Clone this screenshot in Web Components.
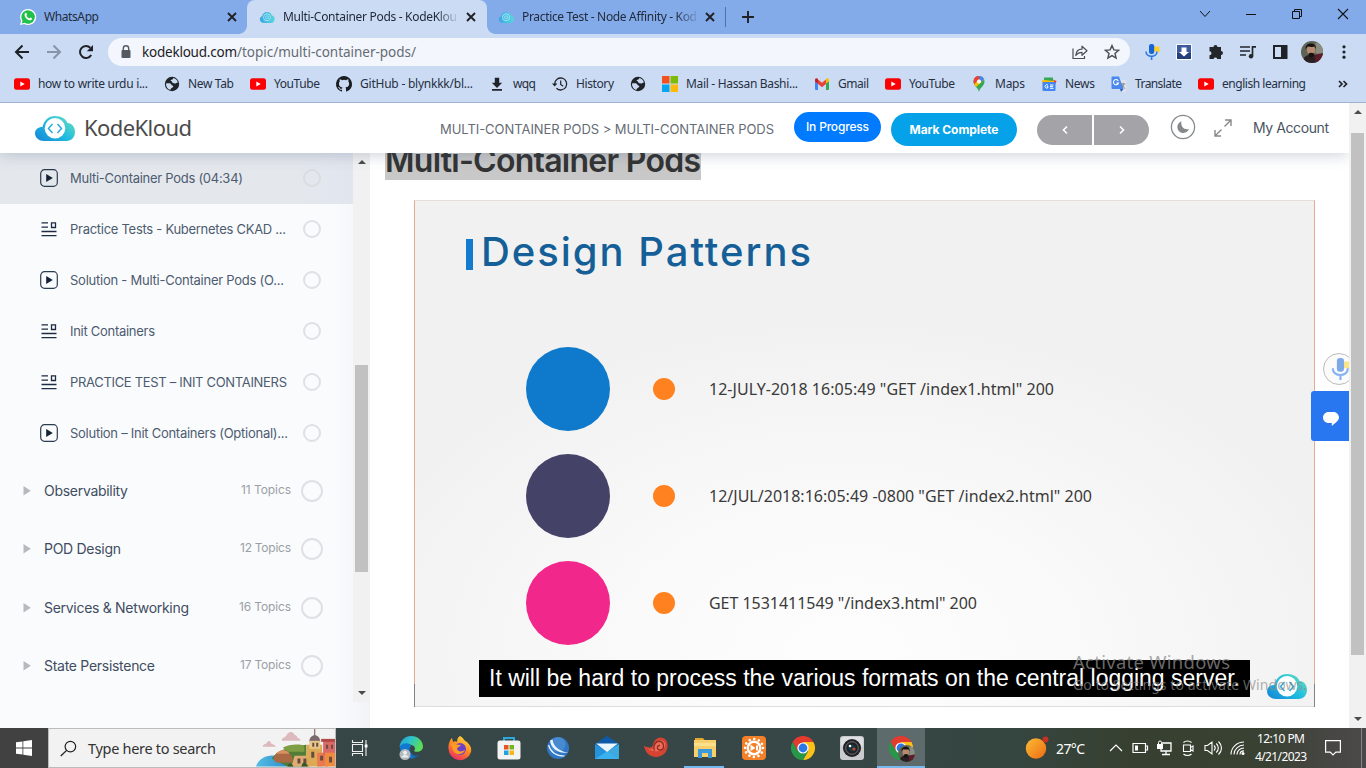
<!DOCTYPE html>
<html lang="en">
<head>
<meta charset="utf-8">
<title>Multi-Container Pods - KodeKloud</title>
<style>
html,body{margin:0;height:100%;overflow:hidden;background:#fff}
body{font-family:"Noto Sans","Open Sans",sans-serif;font-size:12px;color:#202124}
</style>
</head>
<body>
<desktop-screen></desktop-screen>
<script>
const cloud = `<defs><linearGradient id="c" x1="0" y1="1" x2="1" y2=".2"><stop offset="0" stop-color="#1584d8"/><stop offset=".55" stop-color="#1fbcdf"/><stop offset="1" stop-color="#62dcc0"/></linearGradient></defs>
<path fill="url(#c)" d="M9 25C4 25 0 21.500 0 17.500S3 11 7.500 11C9 4.500 13.500 0 20 0s11 3 12.500 7C37 7 40 11 40 16s-3.500 9-8.500 9z"/><circle cx="20" cy="12.300" r="10.300" fill="#fff"/>
<path d="M17.500 8 13.500 12.500 17.500 17M22.500 8l4 4.500-4 4.500" fill="none" stroke="#2ba9d8" stroke-width="1.500"/>`;
const chrome = `<path fill="#e33b2e" d="M12 12 2 6a12 12 0 0 1 20.400 0z"/><path fill="#e33b2e" d="M1.600 6A12 12 0 0 1 22.400 6H12l-5.200 9z"/><path fill="#fbc116" d="M22.400 6A12 12 0 0 1 12 24l5.200-9L12 6z"/><path fill="#279847" d="M12 24A12 12 0 0 1 1.600 6l5.200 9 5.200 3 5.200-3z"/><circle cx="12" cy="12" r="5.600" fill="#fff"/><circle cx="12" cy="12" r="4.400" fill="#2d78e8"/>`;
const avatar = `<defs><clipPath id="k"><circle cx="12" cy="12" r="12"/></clipPath></defs><g clip-path="url(#k)"><path fill="#5d6456" d="M0 0h24v24H0z"/><path fill="#8a8d7f" d="M16 2h8v12h-8z"/><path fill="#2a2022" d="M2 24c0-7 4-9 9-9 6 0 11 1 13 9z"/><path fill="#5c1f29" d="m15 15 9-2v11h-8z"/><ellipse cx="11" cy="10" rx="4.500" ry="6" fill="#b98a72"/><path fill="#17140f" d="M5 9C4 1 17 0 16.500 9l-1.500-3c-3 1-6 0-8 0zM8 14c2-1.500 4.500-1.500 6.500 0l-1 3-3 1.500-2-2z"/></g>`;
/* name: [viewBox, markup] */
const ICONS = {
 whatsapp:['0 0 16 16',`<path fill="#fff" d="M8 0a8 8 0 1 1-3.700 15L0 16l1.200-4A8 8 0 0 1 8 0z"/><path fill="#21c04b" d="M8 1.200a6.800 6.800 0 1 1-3.500 12.600L1.700 14.400l.8-2.700A6.800 6.800 0 0 1 8 1.200z"/><path fill="#fff" d="M5.400 4c.5-.3.900-.1 1.100.4l.5 1.200c.1.300-.5.800-.5 1.100.6 1.300 1.500 2.100 2.800 2.700.4 0 .8-.8 1.100-.9l1.500.8c.3.400-.1 1.600-1 1.900-2.400.7-6-2.400-6.300-5C4.500 5.200 4.900 4.400 5.400 4z"/>`],
 cloud:['0 0 40 25',cloud],
 minicloud:['0 0 16 11','<defs><linearGradient id="q" x2="1"><stop stop-color="#3aa5e4"/><stop offset="1" stop-color="#55d8dc"/></linearGradient></defs><path fill="url(#q)" d="M4 11a4 3.700 0 0 1-.8-7A5 5 0 0 1 12.800 3.200 4 4 0 0 1 12 11z"/><circle cx="8" cy="5.300" r="3.500" fill="none" stroke="#a5e2f2" stroke-width="1"/><circle cx="8" cy="5.300" r="1.500" fill="none" stroke="#a5e2f2" stroke-width=".9"/>'],
 x:['0 0 16 16','<path d="M4 4l8 8M12 4l-8 8" stroke="currentColor" stroke-width="1.900"/>'],
 plus:['0 0 16 16','<path d="M8 2v12M2 8h12" stroke="currentColor" stroke-width="1.900"/>'],
 chevdown:['0 0 16 16','<path d="M3 5l5 5.500L13 5" fill="none" stroke="#111" stroke-width="1"/>'],
 min:['0 0 16 16','<path d="M3 8.500h10" stroke="#111"/>'],
 restore:['0 0 16 16','<path d="M3.500 5.500h7v7h-7zM5.500 5.500v-2h7v7h-2" fill="none" stroke="#111"/>'],
 close:['0 0 16 16','<path d="M3 3l10 10M13 3L3 13" stroke="#111" stroke-width="1.100"/>'],
 back:['0 0 16 16','<path d="M15 8H2.500M8.500 1.500 2 8l6.500 6.500" fill="none" stroke="currentColor" stroke-width="2"/>'],
 fwd:['0 0 16 16','<path d="M1 8h12.500M7.500 1.500 14 8l-6.500 6.500" fill="none" stroke="currentColor" stroke-width="2"/>'],
 reload:['0 0 16 16','<path d="M13.200 11A6 6 0 1 1 12.300 3.800" fill="none" stroke="currentColor" stroke-width="2"/><path d="M15 1v6.200H8.800z" fill="currentColor"/>'],
 lock:['0 0 16 16','<rect x="3.500" y="6" width="9" height="8" rx="1" fill="#555a60"/><path d="M5.300 7V4.500a2.700 2.700 0 0 1 5.400 0V7" fill="none" stroke="#555a60" stroke-width="1.400"/>'],
 share:['0 0 16 16','<path d="M1 4.500v10h11.500V12" fill="none" stroke="#4a4e55" stroke-width="1.200"/><path d="M3.800 11.500C4 7.500 6.500 5.200 10 5.200V2.200l5 4.600-5 4.500V8.300c-2.700 0-4.700 1-6.200 3.200z" fill="none" stroke="#4a4e55" stroke-width="1.200" stroke-linejoin="round"/>'],
 star:['0 0 16 16','<path d="m8 1.600 1.900 4.300 4.700.4-3.600 3.100 1.100 4.600L8 11.600 3.900 14 5 9.400 1.400 6.300l4.700-.4z" fill="none" stroke="#4a4e55" stroke-width="1.400"/>'],
 mic:['0 0 16 16','<path fill="#fcd12a" d="M9 2.500h6.500v6.500L13.500 7.500H9z"/><rect x="5" y="0" width="5.200" height="10" rx="2.200" fill="#1565d8"/><path d="M2 7.500c0 6.500 11 6.500 11 0M7.600 12.500V16" fill="none" stroke="#2a7be8" stroke-width="1.600"/>'],
 dlbox:['0 0 16 16','<path fill="#fff" d="M0 0h16v16H0z"/><path fill="#3d5aa0" d="M1 1h14v14H1z"/><path fill="#263f7c" d="M1 9h14v6H1z"/><path fill="#fff" d="M5.500 3.500h5V8h2.500l-5 4.500L3 8h2.500z"/>'],
 puzzle:['0 0 16 16','<path fill="#23262b" d="M5.500 3a2 2 0 0 1 4 0H13v4a2 2 0 0 1 0 4v4H9.300a1.900 1.900 0 0 0-3.700 0H1.500v-3.700a2 2 0 0 0 0-4V3z"/>'],
 list:['0 0 16 16','<path d="M0 3h10M0 7h10M0 11h6M12.500 12V2.800H16" fill="none" stroke="#23262b" stroke-width="1.700"/><circle cx="11" cy="12.300" r="2.200" fill="#23262b"/>'],
 panel:['0 0 16 16','<path d="M2 2h12.500v12H2z" fill="none" stroke="#1f2226" stroke-width="2"/><path fill="#1f2226" d="M9 2h5v12H9z"/>'],
 avatar:['0 0 24 24',avatar],
 dots:['0 0 16 16','<g fill="#1f2226"><circle cx="8" cy="2.800" r="1.600"/><circle cx="8" cy="8" r="1.600"/><circle cx="8" cy="13.200" r="1.600"/></g>'],
 yt:['0 0 16 16','<rect y="2.300" width="16" height="11.400" rx="2.500" fill="#fb0204"/><path fill="#fff" d="m6.300 5.600 4.400 2.400-4.400 2.400z"/>'],
 globe:['0 0 16 16','<circle cx="8" cy="8" r="7.200" fill="#202327"/><path fill="#cbdbf4" d="M2 7.500c2.500-.6 5-.3 5.300.9.300 1.200 1.900.7 2 1.800.1 1.400-1.700 1.200-2.200 2.200l-1 1.500C3.500 13 1.800 10.500 2 7.500zM9 1.900c.5.700-.2 1.600-1.500 1.800-1.500.3-.8 1.300.2 1.500l1 1.700 2.500.7c1-.2.900-1.200 2.700-1.200C13.500 4 11.500 2.200 9 1.900z"/>'],
 github:['0 0 16 16','<path fill="#191c20" d="M8 0a8 8 0 0 0-2.530 15.590c.4.070.55-.17.55-.38v-1.490c-2.010.37-2.530-.49-2.690-.94-.09-.23-.48-.94-.82-1.130-.28-.15-.68-.52-.01-.53.630-.01 1.080.58 1.230.82.720 1.210 1.870.87 2.330.66.070-.52.280-.87.510-1.070-1.780-.2-3.640-.89-3.640-3.950 0-.87.310-1.590.82-2.150-.08-.2-.36-1.020.08-2.120 0 0 .67-.21 2.200.82a7.600 7.600 0 0 1 4 0c1.530-1.040 2.200-.82 2.200-.82.44 1.100.16 1.920.08 2.120.51.560.82 1.270.82 2.150 0 3.070-1.870 3.750-3.650 3.950.29.250.54.730.54 1.480v2.200c0 .21.150.46.550.38A8 8 0 0 0 8 0z"/>'],
 download:['0 0 16 16','<path fill="#202327" d="M5.800 1.800h4.400v5h3L8 12 2.800 6.800h3zM3 13h10v1.800H3z"/>'],
 history:['0 0 16 16','<path d="M2.700 8a6 6 0 1 1 1.800 4.300" fill="none" stroke="#202327" stroke-width="1.300"/><path fill="#202327" d="M0 7.500h5.400L2.700 10.500z"/><path d="M8.700 4.500v4l2.500 1.700" fill="none" stroke="#202327" stroke-width="1.200"/>'],
 ms:['0 0 16 16','<path fill="#f1501f" d="M0 0h7.500v7.500H0z"/><path fill="#7ebb06" d="M8.500 0H16v7.500H8.500z"/><path fill="#05a5ef" d="M0 8.500h7.500V16H0z"/><path fill="#feba08" d="M8.500 8.500H16V16H8.500z"/>'],
 gmail:['0 0 16 16','<path fill="#4285f4" d="M1 4.500V13a1 1 0 0 0 1 1h2V7z"/><path fill="#34a853" d="M15 4.500V13a1 1 0 0 1-1 1h-2V7z"/><path fill="#ea4335" d="M4 3.500l4 3.200 4-3.200V8l-4 3.200L4 8z"/><path fill="#c5221f" d="M1 4c0-1.600 1.600-2.200 3-1v4.500L1 5.500z"/><path fill="#fbbc04" d="M15 4c0-1.600-1.600-2.200-3-1v4.500l3-2z"/>'],
 maps:['0 0 16 16','<path fill="#34a853" d="M8 16C7.500 12 2.500 10 2.500 5.500a5.500 5.500 0 0 1 11 0C13.500 10 8.500 12 8 16z"/><path fill="#ea4335" d="M3.300 2.800A5.500 5.500 0 0 1 8 0L5.500 5.500z"/><path fill="#fbbc04" d="m3 8 6-7 4.300 2.500L5 11z"/><path fill="#4285f4" d="M8 0a5.500 5.500 0 0 1 5 3.200L10.500 6 7 2z"/><path fill="#ea4335" d="M2.500 5.500c0-2.800 2-5 4.500-5.400L9 2 3.200 8.300z"/><circle cx="8" cy="5.400" r="2" fill="#fff"/>'],
 news:['0 0 16 16','<path fill="#34a853" d="M3 1.500h9v4H3z"/><path fill="#ea4335" d="M12 3.500 15.500 5 14 9z"/><path fill="#fbbc04" d="m.800 4.500 3-.5L13 5v3H1.500z"/><rect x="1.500" y="6" width="13" height="9" rx="1" fill="#4285f4"/><path d="M7 9.200a1.700 1.700 0 1 0 0 2.400v-1H5.800M9 9h3.500M9 10.600h3M9 12.300h3.500" fill="none" stroke="#fff" stroke-width="1"/>'],
 translate:['0 0 16 16','<path fill="#dfe3e8" d="M7 4h7.500a1 1 0 0 1 1 1v10a1 1 0 0 1-1 1H10z"/><path fill="#4a88ee" d="M1.500.5H8l4.500 12.500H1.500a1 1 0 0 1-1-1v-10.500a1 1 0 0 1 1-1z"/><path fill="#2a5cc0" d="M9 13h3.500L10 16z"/><path d="M7.300 4.900A2.600 2.600 0 1 0 7.500 7H5.300" fill="none" stroke="#fff" stroke-width="1.100"/><path d="M9.800 8h4.500M12 7v1c.5 0 1 2-1.500 4.500M11 9c.8 1.800 2 2.800 3.200 3.500" fill="none" stroke="#6b7f94" stroke-width=".9"/>'],
 more:['0 0 16 16','<path d="M4 5l3 3-3 3M8.500 5l3 3-3 3" fill="none" stroke="#202327" stroke-width="1.700"/>'],
 left:['0 0 16 16','<path d="M10 4.500 6.500 8l3.500 3.500" fill="none" stroke="#fff" stroke-width="1.600"/>'],
 right:['0 0 16 16','<path d="M6 4.500 9.500 8 6 11.500" fill="none" stroke="#fff" stroke-width="1.600"/>'],
 moon:['0 0 26 26','<circle cx="13" cy="13" r="11.600" fill="none" stroke="#86898c" stroke-width="1.300"/><path fill="#86898c" d="M11.500 7.300a6 6 0 1 0 7.500 7.700c-4.500 1.500-8.800-2.500-7.500-7.700z"/>'],
 expand:['0 0 18 18','<path d="M11 1h6v6M17 1l-6.500 6.500M7 17H1v-6M1 17l6.500-6.500" fill="none" stroke="#86898c" stroke-width="1.400"/>'],
 play:['0 0 18 18','<rect x=".7" y=".7" width="16.600" height="16.600" rx="3.800" fill="none" stroke="#2b3c50" stroke-width="1.200"/><path fill="#142236" d="M6.200 5v8L12.800 9z"/>'],
 topic:['0 0 18 18','<path d="M1.500 2.800H8M1.500 7.200H8M1.500 11.500h15M1.500 15.700h15M11.500 2.800h4v4.700h-4z" fill="none" stroke="#1c2c42" stroke-width="1.300"/>'],
 tri:['0 0 8 10','<path fill="#b6b9bd" d="M.5 0v9.500L7.800 4.800z"/>'],
 up:['0 0 8 4','<path fill="#4b4b4b" d="M0 4h8L4 0z"/>'],
 down:['0 0 8 4','<path fill="#4b4b4b" d="M0 0h8L4 4z"/>'],
 bubble:['0 0 16 14','<path fill="#fff" d="M5.500 0h5C13.500 0 16 2.500 16 5.500S13 10.500 8.800 14V11H5.500C2.500 11 0 8.500 0 5.500S2.500 0 5.500 0z"/>'],
 win:['0 0 16 16','<path fill="#fff" d="M0 2.300 6.500 1.400v6.200H0zM7.300 1.300 16 0v7.600H7.300zM0 8.400h6.500v6.200L0 13.700zM7.300 8.400H16V16l-8.700-1.300z"/>'],
 search:['0 0 18 18','<circle cx="11" cy="7" r="5.600" fill="none" stroke="#222" stroke-width="1.300"/><path d="M7 11 .8 17" stroke="#222" stroke-width="1.400"/>'],
 village:['0 0 80 38',`<defs><linearGradient id="v" x2="1"><stop stop-color="#56bde5"/><stop offset="1" stop-color="#2b8dc8"/></linearGradient></defs><g fill="#ddb9bd"><path d="M7 18c0-3 3-2 4-4 1-3 4-2 4 0s4 1 5 4zM26 12c0-4 4-3 5-6 2-4 7-4 8 0 2 0 3 2 3 3 2 0 3 1 3 3z"/></g><path fill="url(#v)" d="M0 38c3-9 11-12 22-11s12 8 10 11z"/><path fill="#537c37" d="M16 30c9-12 24-12 35-14v22H32z"/><path fill="#7f9d42" d="M27 19c7-4 17-4 22-2v6H33z"/><path fill="#aa6942" d="M18 31c0-11 16-12 19-1v4H20z"/><path fill="#d6915e" d="M21 25c3-5 10-5 13 0z"/><path fill="#dfad73" d="M39 27h16v11H36z"/><path fill="#dcaa55" d="M51 16h16v22H51z"/><path fill="#7b6a6c" d="M54 13c0-9 11-9 11 0z"/><path fill="#e7c68c" d="M54 12h11v8H54z"/><path stroke="#6e5148" d="M59.500 0v7"/><path fill="#e9794e" d="M62 24h11v14H62z"/><path fill="#d86966" d="M68 12h12v15H68z"/><path fill="#b04844" d="M66 10h14v3H66z"/><path fill="#f08c3d" d="M70 24h10v14H70z"/><path fill="#694a40" d="M42 30h3v5h-3zM48 30h3v5h-3zM56 23h3v6h-3zM65 27h3v5h-3zM74 28h3v6h-3zM71 16h2v4h-2zM76 16h2v4h-2zM57 14h2v4h-2zM61 14h2v4h-2z"/><path fill="#37572e" d="M46 38c1-5 4-6 7 0zM32 38c1-4 4-4 6 0z"/>`],
 taskview:['0 0 16 16','<path d="M.5 0v2.500h10V0M.5 16v-2.500h10V16M.5 4.500h10v7H.5zM14 0v16" fill="none" stroke="#eee" stroke-width="1.100"/><path fill="#fff" d="M12.700 4.500h2.800v3h-2.800z"/>'],
 edge:['0 0 24 24',`<defs><linearGradient id="a" x2="1" y2=".4"><stop stop-color="#1e9ee0"/><stop offset=".5" stop-color="#2fc2c9"/><stop offset="1" stop-color="#5bdc56"/></linearGradient></defs><path fill="#1668b8" d="M1 9a12 12 0 0 0 20 10c-4 2-9 0-10-5z"/><path fill="url(#a)" d="M.5 11C1.500 4 6 0 12 0c7 0 12 5 12 10.500 0 5-6 6.500-9 4.500 2-2 1-5-2.500-6C7 8 2 9 .5 11z"/><path fill="#1179cf" d="M1 10c4-4 11-3 11 0-3 3-2 11 4 12A12 12 0 0 1 1 10z"/><circle cx="6" cy="18.500" r="5.500" fill="#b2b9bd"/><circle cx="6" cy="16.800" r="2" fill="#eee"/><path fill="#eee" d="M2.500 21.500c0-3.500 7-3.500 7 0z"/>`],
 firefox:['0 0 24 24',`<defs><linearGradient id="f" x1=".8" x2=".3" y2="1"><stop stop-color="#ffe03c"/><stop offset=".5" stop-color="#ff8a22"/><stop offset="1" stop-color="#ee2965"/></linearGradient></defs><path fill="url(#f)" d="M12 0c5 3 3 4 7 6 3 3 5 6 4 10a11.500 11.500 0 0 1-22.500-3C0 8 2 4 4 2l1 4c2-1 3-1 4 0 0-3 1-5 3-6z"/><circle cx="12" cy="13" r="6" fill="#6e3fc9"/><path fill="#fb9c25" d="M3 8c4-1 6 1 10 1-1 2-4 2-4 4 1 3 5 3 8 1-1 5-10 6-12 0z"/>`],
 store:['0 0 24 24','<path d="M7 7V2h10v5" fill="none" stroke="#29a9dd" stroke-width="2"/><rect x=".5" y="4.500" width="23" height="19" rx="2.500" fill="#f3f3f3"/><path fill="#e85226" d="M7 9h4.500v4.500H7z"/><path fill="#78b51c" d="M12.500 9H17v4.500h-4.500z"/><path fill="#1fa1e2" d="M7 14.500h4.500V19H7z"/><path fill="#f7b718" d="M12.500 14.500H17V19h-4.500z"/>'],
 planet:['0 0 24 24','<circle cx="12" cy="12" r="11" fill="#2f76c4"/><circle cx="12" cy="8.500" r="7.500" fill="#5a98d8" opacity=".6"/><path d="M4 4.500c1 8 8 13 18.500 12.500C13 15 7.500 11 6.500 3.500" fill="#eaf4ff"/><path d="M2.500 9c2 7 8 11 16 11" fill="none" stroke="#eaf4ff" stroke-width="1.200"/>'],
 mail:['0 0 24 24','<path fill="#0d5ba8" d="M0 8 12 0l12 8v5H0z"/><path fill="#2493dc" d="M0 8v15h24z"/><path fill="#3eb4f0" d="M24 8v15H0z" opacity=".9"/><path fill="#eaf6fd" d="M1 7.500h22L12 16z"/>'],
 shell:['0 0 24 24','<path fill="#d54333" d="M0 10c5 2 8 2 9-1 1-6 6-9 10-7 6 2 6 12 1 16-7 6-18 3-20-8z"/><path fill="#ef6c56" d="M2 11c5 4 8 2 9-2 2-5 8-6 10-2 2 8-11 12-19 4z"/><path d="M10.500 14.500c-2-6 2-10 6-9s4 8 0 8.500-4-5-.5-4.500" fill="none" stroke="#8a2d28" stroke-width="1.300"/>'],
 explorer:['0 0 24 24','<path fill="#e3a72e" d="M2 2h8l2 2.500H2z"/><path fill="#f8d06b" d="M1 4h22v17H1z"/><path fill="#fde08d" d="M1 7h22v3H1z"/><path fill="#3999dc" d="M5 13h14v9h-4v-5H9v5H5z"/>'],
 orange:['0 0 24 24','<rect width="24" height="24" rx="4" fill="#f5802a"/><circle cx="12" cy="12" r="9" fill="none" stroke="#fff" stroke-width="2.600" stroke-linecap="round" stroke-dasharray="0.010 4.702"/><circle cx="12" cy="12" r="6.300" fill="none" stroke="#fff" stroke-width="2.400"/><path fill="#fff" d="m8.500 8.500 5 3.500-5 3zM14 9.500h2v5h-2z"/>'],
 chrome:['0 0 24 24',chrome],
 camera:['0 0 24 24','<rect width="24" height="24" rx="3" fill="#c9cbcc"/><rect x="1" y="1" width="22" height="10" rx="3" fill="#dedfe0"/><circle cx="12" cy="12" r="9" fill="#202225"/><circle cx="12" cy="12" r="6.300" fill="none" stroke="#6c7376" stroke-width="1"/><circle cx="12" cy="12" r="3.500" fill="#173a44"/><circle cx="14" cy="13" r="1.600" fill="#c5442f"/><circle cx="10" cy="10" r="1.300" fill="#fff"/>'],
 weather:['0 0 24 24','<defs><linearGradient id="w" x1="0" y1="0" x2="1" y2="1"><stop stop-color="#fbbd35"/><stop offset="1" stop-color="#ee6a12"/></linearGradient></defs><circle cx="11" cy="12.500" r="10.200" fill="url(#w)"/><circle cx="20.500" cy="3.500" r="3" fill="#c43126"/>'],
 chevup:['0 0 16 16','<path d="M2 11l6-6 6 6" fill="none" stroke="#fff" stroke-width="1.200"/>'],
 battery:['0 0 16 16','<path d="M1 3.500h12.500v9H1zM14 6h1.500v4H14" fill="none" stroke="#fff" stroke-width="1.200"/><path fill="#fff" d="M3 5.500h3v5H3z"/>'],
 net:['0 0 16 16','<path d="M6 3h9v8H5V9M10 11v3M6 14.500h8" fill="none" stroke="#fff" stroke-width="1.300"/><path d="M2.500 4V2.500a1.500 1.500 0 0 1 3 0V4" fill="none" stroke="#fff"/><path fill="#fff" d="M1 4h6v5H1z"/>'],
 meet:['0 0 16 16','<path d="M3.500 5h7v6.500h-7zM10.500 7.500 13 6v5l-2.500-1.500M3.500 2.500c2-2 6-2 8 0M3.500 14c2 2 6 2 8 0" fill="none" stroke="#fff" stroke-width="1.100"/>'],
 sound:['0 0 18 16','<path d="M1 5.500h2.500L8 2v12l-4.500-3.500H1zM10 5.500c1.500 1.500 1.500 3.500 0 5M12.300 3.500c2.700 2.700 2.700 6.500 0 9M14.500 1.500c4 4 4 9 0 13" fill="none" stroke="#fff" stroke-width="1.100"/>'],
 wifi:['0 0 16 16','<path d="M1 14.500C1 7.500 7 2 14 2M4 14.500c0-5 4.500-9.300 10-9.500M7 14.500c0-3.500 3-6.500 7-6.500M10 14.500c0-2 1.500-3.600 4-3.600" fill="none" stroke="#fff" stroke-width="1.100"/><circle cx="13" cy="13.600" r="1.500" fill="#fff"/>'],
 note:['0 0 16 16','<path d="M.6.600h14.800v11.600h-4.600L8 15 5.200 12.200H.6z" fill="none" stroke="#fff" stroke-width="1.200"/>']
};
function define(name, css, html, setup){
  const t = document.createElement('template');
  t.innerHTML = `<style>*{box-sizing:border-box}${css}</style>${html}`;
  customElements.define(name, class extends HTMLElement{
    connectedCallback(){
      if(this.shadowRoot) return;
      this.attachShadow({mode:'open'}).append(t.content.cloneNode(true));
      if(setup) setup(this, this.shadowRoot);
    }
  });
}

define('desktop-screen', `:host{display:flex;flex-direction:column;width:1366px;height:768px;position:relative;overflow:hidden}
 .page{height:625px;display:flex}.view{width:1349px;position:relative;display:flex;flex-direction:column;overflow:hidden}
 .body{flex:1;display:flex;min-height:0}
 .water{position:absolute;left:1073px;top:650px;color:rgba(140,140,140,.75);display:flex;flex-direction:column}
 .water .a{font-size:18.500px;line-height:24px}.water .b{font-size:14px;line-height:21px;color:rgba(140,140,140,.7)}
 `, `<browser-tabs></browser-tabs><browser-toolbar></browser-toolbar><bookmark-bar></bookmark-bar>
 <div class="page"><div class="view"><site-header></site-header><div class="body"><course-sidebar></course-sidebar><lesson-content></lesson-content></div><side-widgets></side-widgets></div>
 <scroll-bar style="--start:30px;--len:522px;--h:625px"></scroll-bar></div><task-bar></task-bar>
 <div class="water"><fit-text class="a" w="157">Activate Windows</fit-text><fit-text class="b" w="234">Go to Settings to activate Windows.</fit-text></div>`);

define('browser-tabs', `:host{display:flex;height:34px;background:#84abe9;position:relative;flex:none}
 .tabs{display:flex;flex:1}.tab{display:flex;align-items:center;height:34px}
 .t1{width:247px;padding:0 7px 0 20px}.t2{width:240px;padding:0 8px 0 12px;background:#cbdbf4;border-radius:8px 8px 0 0;position:relative}
 .t2:before,.t2:after{content:"";position:absolute;bottom:0;width:8px;height:8px}
 .t2:before{left:-8px;background:radial-gradient(circle at 0 0,#84abe9 7.500px,#cbdbf4 8px)}.t2:after{right:-8px;background:radial-gradient(circle at 100% 0,#84abe9 7.500px,#cbdbf4 8px)}
 .t3{width:239px;padding:0 7px 0 11px;border-right:1px solid #4f70a8;height:20px;align-self:center}
 .tab fit-text{margin-left:8px}.tab .x{margin-left:auto}.plus{align-self:center;margin-left:14px}
 .fade{-webkit-mask-image:linear-gradient(90deg,#000 88%,rgba(0,0,0,.12));mask-image:linear-gradient(90deg,#000 88%,rgba(0,0,0,.12))}
 .win{display:flex;height:28px;align-items:center;gap:30px;padding-right:15px}fit-text{color:#222b3c;font-size:12px;margin-top:-1px}`,
 `<div class="tabs"><div class="tab t1"><ui-icon name="whatsapp" s="16"></ui-icon><fit-text w="55">WhatsApp</fit-text><ui-icon class="x" name="x" s="16"></ui-icon></div>
 <div class="tab t2"><ui-icon name="minicloud" s="16"></ui-icon><fit-text class="fade" w="174">Multi-Container Pods - KodeKlou</fit-text><ui-icon class="x" name="x" s="16"></ui-icon></div>
 <div class="tab t3"><ui-icon name="minicloud" s="16"></ui-icon><fit-text class="fade" w="175">Practice Test - Node Affinity - Kod</fit-text><ui-icon class="x" name="x" s="16"></ui-icon></div><ui-icon class="plus" name="plus" s="16"></ui-icon></div>
 <div class="win"><ui-icon name="chevdown" s="16"></ui-icon><ui-icon name="min" s="16"></ui-icon><ui-icon name="restore" s="16"></ui-icon><ui-icon name="close" s="16"></ui-icon></div>`);

define('browser-toolbar', `:host{display:flex;height:36px;background:#cbdbf4;align-items:center;padding:0 14px;flex:none}
 .nav{display:flex;gap:16px;color:#1e2126}.nav .f{color:#8793a9}
 .omni{margin-left:14px;width:1022px;height:28px;border-radius:14px;background:#f3f7fd;display:flex;align-items:center;padding:0 10px}
 .omni fit-text{font-size:13.500px}.h{margin-left:8px;color:#1d2024}.p{color:#666b73}.sh{margin-left:auto}.st{margin-left:16px}
 .ext{display:flex;align-items:center;gap:16px;margin-left:14px}.ext .av{margin:0 -3px}`,
 `<div class="nav"><ui-icon name="back" s="16"></ui-icon><ui-icon class="f" name="fwd" s="16"></ui-icon><ui-icon name="reload" s="16"></ui-icon></div>
 <div class="omni"><ui-icon name="lock" s="16"></ui-icon><fit-text class="h" w="95">kodekloud.com</fit-text><fit-text class="p" w="179">/topic/multi-container-pods/</fit-text><ui-icon class="sh" name="share" s="16"></ui-icon><ui-icon class="st" name="star" s="16"></ui-icon></div>
 <div class="ext"><ui-icon name="mic" s="16"></ui-icon><ui-icon name="dlbox" s="16"></ui-icon><ui-icon name="puzzle" s="16"></ui-icon><ui-icon name="list" s="16"></ui-icon><ui-icon name="panel" s="16"></ui-icon><ui-icon class="av" name="avatar" s="22"></ui-icon><ui-icon name="dots" s="16"></ui-icon></div>`);

define('bookmark-bar', `:host{display:flex;height:33px;background:#cbdbf4;border-bottom:1px solid #9fb2d2;align-items:center;padding:0 15px 5px 14px;gap:16px;flex:none}
 .b{display:flex;align-items:center;gap:8px;font-size:12px;color:#263042}.m{margin-left:auto}`, ``,
 (el, root)=>{
  const items=[['yt','how to write urdu i...',110],['globe','New Tab',46],['yt','YouTube',46],['github','GitHub - blynkkk/bl...',113],['download','wqq',23],['history','History',38],['globe'],['ms','Mail - Hassan Bashi...',112],['gmail','Gmail',31],['yt','YouTube',46],['maps','Maps',30],['news','News',30],['translate','Translate',47],['yt','english learning',84]];
  root.innerHTML += items.map(([i,t,w])=>`<div class="b"><ui-icon name="${i}" s="16"></ui-icon>${t?`<fit-text w="${w}">${t}</fit-text>`:''}</div>`).join('')+'<ui-icon class="m" name="more" s="16"></ui-icon>';
 });

define('site-header', `:host{display:flex;height:50px;flex:none;background:#fff;box-shadow:0 2px 14px rgba(60,80,110,.26);position:relative;z-index:3;align-items:center;padding-left:35px;font-family:Inter,sans-serif}
 .brand{display:flex;align-items:center;gap:9px}.brand fit-text{font:22px/30px "Noto Sans",sans-serif;color:#4b4b4b;margin-top:-2px}
 .brand ui-icon{margin-top:0}
 .crumb{margin-left:248px;font-size:13px;color:#656c76;line-height:20px;padding-top:2px}
 .pill{display:flex;align-items:center;justify-content:center;color:#fff;font-size:12px}
 .ip{margin:-2px 0 0 20px;width:87px;height:30px;border-radius:15px;background:#007bff;font-weight:500}
 .ip fit-text,.mc fit-text{margin-top:-1px}
 .mc{margin:3px 0 0 10px;width:126px;height:33px;border-radius:17px;background:#05a2e9;font-weight:700}
 .nv{display:flex;gap:2px;margin:4px 0 0 20px}.nv div{width:55px;height:30px;background:#a3a3a8;display:flex;align-items:center;justify-content:center}
 .nv div:first-child{border-radius:15px 0 0 15px}.nv div:last-child{border-radius:0 15px 15px 0}
 .moon{margin:-2px 0 0 21px}.ex{margin-left:18px;margin-top:-1px}.acc{margin:-1px 0 0 21px;font-size:14px;color:#4a5462}`,
 `<div class="brand"><ui-icon name="cloud" s="40"></ui-icon><fit-text w="108">KodeKloud</fit-text></div>
 <fit-text class="crumb" w="334">MULTI-CONTAINER PODS &gt; MULTI-CONTAINER PODS</fit-text>
 <div class="pill ip"><fit-text w="63">In Progress</fit-text></div><div class="pill mc"><fit-text w="89">Mark Complete</fit-text></div>
 <div class="nv"><div><ui-icon name="left" s="16"></ui-icon></div><div><ui-icon name="right" s="16"></ui-icon></div></div>
 <ui-icon class="moon" name="moon" s="26"></ui-icon><ui-icon class="ex" name="expand" s="18"></ui-icon><fit-text class="acc" w="76">My Account</fit-text>`);

define('course-sidebar', `:host{display:flex;width:370px;height:575px;background:linear-gradient(90deg,#fafbfd 335px,#f1f3f6);font-family:Inter,sans-serif;flex:none}
 .rows{width:353px;display:flex;flex-direction:column}
 .l{height:51px;display:flex;align-items:center;padding:0 32px 2px 40px;flex:none;font-size:13px;color:#4d5b70}
 .l.on{background:linear-gradient(90deg,#e4e8ed 300px,#e1e5ef)}.l fit-text{margin-left:12px}.l i,.g i{display:block;margin-left:auto;border-radius:50%;border:2px solid #dfe0e3;width:18px;height:18px;flex:none}.l.on i{border-color:#dadde0}
 .g{height:58.300px;display:flex;align-items:center;padding:0 30px 0 23px;font-size:14px;color:#3f4d61}.g .n{margin-left:13px;margin-top:-1px}.g .c{margin-left:auto;font-size:12px;color:#9b9fa5;margin-top:-3px}.g i{width:22px;height:22px;margin-left:10px;border-width:2px}
 `, `<div class="rows"></div><scroll-bar style="--start:212px;--len:207px;--h:549px"></scroll-bar>`,
 (el, root)=>{
  const L=[['play','Multi-Container Pods (04:34)',173,'on'],['topic','Practice Tests - Kubernetes CKAD ...',216],['play','Solution - Multi-Container Pods (O...',214],['topic','Init Containers',85],['topic','PRACTICE TEST – INIT CONTAINERS',217],['play','Solution – Init Containers (Optional)...',218]];
  const G=[['Observability',84,'11 Topics',50],['POD Design',77,'12 Topics',51],['Services &amp; Networking',145,'16 Topics',52],['State Persistence',111,'17 Topics',51]];
  root.querySelector('.rows').innerHTML = L.map(([i,t,w,c])=>`<div class="l ${c||''}"><ui-icon name="${i}" s="18"></ui-icon><fit-text w="${w}">${t}</fit-text><i></i></div>`).join('')
   + '<div style="height:3px;flex:none"></div>' + G.map(([t,w,c,cw])=>`<div class="g"><ui-icon name="tri" s="8"></ui-icon><fit-text class="n" w="${w}">${t}</fit-text><fit-text class="c" w="${cw}">${c}</fit-text><i></i></div>`).join('');
 });

define('scroll-bar', `:host{display:flex;flex-direction:column;align-items:center;width:17px;height:var(--h);background:#f1f1f1;flex:none;position:relative}
 .up{margin-top:7px}.thumb{width:13px;height:var(--len);background:#c1c1c1;margin-top:calc(var(--start) - 11px)}.dn{margin-top:auto;margin-bottom:7px}`,
 `<ui-icon class="up" name="up" s="8"></ui-icon><div class="thumb"></div><ui-icon class="dn" name="down" s="8"></ui-icon>`);

define('lesson-content', `:host{display:block;flex:1;background:#fff;padding-left:15px}
 h1{margin:-12px 0 0;height:39px;width:316px;background:#c8c8c8;font:600 32px/39px Inter,sans-serif;color:#333;white-space:nowrap}
 design-slide{margin:20px 0 0 29px}`,
 `<h1><fit-text w="316">Multi-Container Pods</fit-text></h1><design-slide></design-slide>`);

define('design-slide', `:host{display:flex;flex-direction:column;width:901px;height:507px;position:relative;border:1px solid #e5aa90;border-top-color:#e6dcd9;border-bottom-color:#ddd;background:radial-gradient(ellipse 520px 340px at 48% 90%,#fdfdfd 0,#fafafa 40%,#f1f1f1 100%)}
 .title{display:flex;align-items:center;margin:25px 0 0 51px;height:52px;gap:8px}.bar{width:7px;height:31px;background:#117ccf;margin-top:4px}
 .title fit-text{font:500 40px/52px Inter,sans-serif;color:#155f98}
 .rows{display:grid;row-gap:23px;margin:69px 0 0 111px}.r{display:flex;align-items:center;height:84px}
 .big{width:84px;height:84px;border-radius:50%}.dot{width:22px;height:22px;border-radius:50%;background:#ff811f;margin:0 34px 0 43px}
 .r fit-text{font-size:16px;color:#3a3a3a;line-height:22px}
 .cap{position:absolute;left:64px;top:459px;width:771px;height:37px;background:#000;color:#fff;font:23px/36px "Liberation Sans",Arial,sans-serif;padding-left:10px}
 .logo{position:absolute;left:852px;top:473px}.edge{position:absolute;top:483px;bottom:-1px;left:-1px;right:-1px;border:solid #808387;border-width:0 1px}`,
 `<div class="title"><div class="bar"></div><fit-text w="330">Design Patterns</fit-text></div>
 <div class="rows"><div class="r"><div class="big" style="background:#0f79cb"></div><div class="dot"></div><fit-text w="345">12-JULY-2018 16:05:49 "GET /index1.html" 200</fit-text></div>
 <div class="r"><div class="big" style="background:#444267"></div><div class="dot"></div><fit-text w="383">12/JUL/2018:16:05:49 -0800 "GET /index2.html" 200</fit-text></div>
 <div class="r"><div class="big" style="background:#f2278b"></div><div class="dot"></div><fit-text w="268">GET 1531411549 "/index3.html" 200</fit-text></div></div>
 <div class="edge"></div><div class="cap"><fit-text w="751">It will be hard to process the various formats on the central logging server.</fit-text></div><ui-icon class="logo" name="cloud" s="40"></ui-icon>`);

define('side-widgets', `:host{position:absolute;left:1311px;top:250px;width:38px;height:90px;display:block;z-index:2}
 .m{width:32px;height:32px;border-radius:50%;border:1px solid #bcbcbc;background:#fbfbfb;margin-left:12px;display:flex;align-items:center;justify-content:center}.m ui-icon{opacity:.55;margin-left:3px}
 .c{margin-top:6px;width:38px;height:50px;border-radius:3px 0 0 3px;background:#2977f0;display:flex;align-items:center;justify-content:center;padding:5px 0 0 2px}`,
 `<div class="m"><ui-icon name="mic" s="22"></ui-icon></div><div class="c"><ui-icon name="bubble" s="16"></ui-icon></div>`);

define('task-bar', `:host{display:flex;height:40px;flex:none;background:linear-gradient(90deg,#364545 0,#374747 800px,#35453f 1020px,#374030 1130px,#394132 1260px,#494746 1340px,#4b4849);align-items:stretch}
 .w{width:48px;background:#414141;display:flex;align-items:center;justify-content:center}
 .s{width:288px;background:#f2f2f2;border:1px solid #bbb;display:flex;align-items:center;padding-left:11px}.s fit-text{font-size:14.500px;margin-left:11px;color:#333}.s .v{margin-left:auto;align-self:flex-end}
 .apps{display:flex}.apps div{width:49px;display:flex;align-items:center;justify-content:center;position:relative}
 .apps .ex:after{content:"";position:absolute;bottom:0;left:4px;right:5px;height:2px;background:#76b9ed}.apps .on{background:#5e6b6c;width:48px;margin-left:1px}.apps .on:after{content:"";position:absolute;bottom:0;left:0;right:0;height:2px;background:#76b9ed}
 .pic{position:absolute;left:21px;top:17px}
 .tray{margin-left:auto;display:flex;align-items:center;color:#fff;padding-right:4px}.tray>ui-icon{margin-left:8px}
 .temp{font-size:14px;margin-left:7px}.clock{display:flex;flex-direction:column;align-items:center;font-size:12px;line-height:18px;margin-left:9px;width:52px}.end{width:1px;height:40px;background:#858585;margin-left:20px}`,
 `<div class="w"><ui-icon name="win" s="16"></ui-icon></div>
 <div class="s"><ui-icon name="search" s="17"></ui-icon><fit-text w="128">Type here to search</fit-text><ui-icon class="v" name="village" s="79"></ui-icon></div>
 <div class="apps"><div style="width:50px;padding-right:2px"><ui-icon name="taskview" s="16"></ui-icon></div><div><ui-icon name="edge" s="24"></ui-icon></div><div><ui-icon name="firefox" s="24"></ui-icon></div><div><ui-icon name="store" s="24"></ui-icon></div><div><ui-icon name="planet" s="24"></ui-icon></div><div><ui-icon name="mail" s="24"></ui-icon></div><div><ui-icon name="shell" s="24"></ui-icon></div><div class="ex"><ui-icon name="explorer" s="24"></ui-icon></div><div><ui-icon name="orange" s="24"></ui-icon></div><div><ui-icon name="chrome" s="24"></ui-icon></div><div><ui-icon name="camera" s="24"></ui-icon></div><div class="on"><ui-icon name="chrome" s="24"></ui-icon><ui-icon class="pic" name="avatar" s="17"></ui-icon></div></div>
 <div class="tray"><ui-icon name="weather" s="24"></ui-icon><fit-text class="temp" w="29">27°C</fit-text><ui-icon style="margin-left:23px" name="chevup" s="16"></ui-icon><ui-icon name="battery" s="16"></ui-icon><ui-icon name="net" s="16"></ui-icon><ui-icon name="meet" s="16"></ui-icon><ui-icon name="sound" s="18"></ui-icon><ui-icon name="wifi" s="16"></ui-icon><div class="clock"><fit-text w="48">12:10 PM</fit-text><fit-text w="52">4/21/2023</fit-text></div><ui-icon style="margin-left:18px" name="note" s="16"></ui-icon><div class="end"></div></div>`);

/* Vector icon: s is the width, the height follows the viewBox. */
define('ui-icon', `:host{display:block;flex:none}svg{display:block;overflow:visible}`, ``, (el, root)=>{
  const [vb, markup] = ICONS[el.getAttribute('name')];
  const [, , w, h] = vb.split(' ').map(Number), s = +el.getAttribute('s');
  root.innerHTML += `<svg viewBox="${vb}" width="${s}" height="${s*h/w}">${markup}</svg>`;
});

/* A single line of text tracked to the advance width given in w. */
define('fit-text', `:host{display:block;flex:none;white-space:nowrap;overflow:visible}span{display:inline-block}`, `<span><slot></slot></span>`, (el, root)=>{
  const w = +el.getAttribute('w'), span = root.querySelector('span');
  el.style.width = w + 'px';
  el.style.letterSpacing = (w - span.getBoundingClientRect().width) / (el.textContent.length - 1) + 'px';
});
</script>
</body>
</html>
